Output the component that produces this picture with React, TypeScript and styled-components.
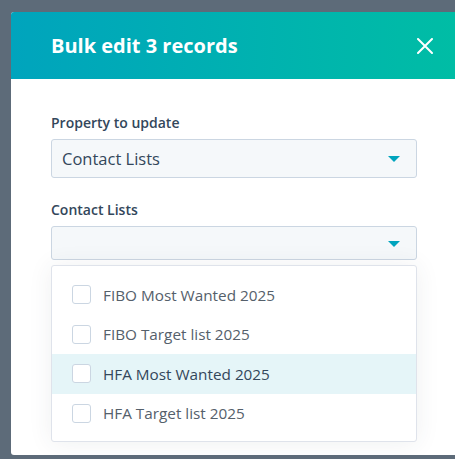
import React from "react";
import styled, { createGlobalStyle } from "styled-components";

const GlobalStyle = createGlobalStyle`
  html, body {
    margin: 0;
    padding: 0;
    background: #5d6b79;
    overflow: hidden;
  }
  body {
    font-family: "Open Sans", "Noto Sans", sans-serif;
    color: #33475b;
  }
`;

const Backdrop = styled.div`
  width: 455px;
  height: 459px;
  padding: 12px 0 0 11px;
  box-sizing: border-box;
`;

const Modal = styled.div`
  width: 444px;
  height: 443px;
  background: #fff;
  border-radius: 3px 0 0 3px;
  overflow: hidden;
  display: flex;
  flex-direction: column;
`;

const Header = styled.div`
  height: 67px;
  flex: none;
  display: flex;
  align-items: center;
  justify-content: space-between;
  padding: 0 22px 0 40px;
  background: linear-gradient(90deg, #00a4bd 0%, #00bda5 100%);
`;

const Title = styled.h1`
  margin: 0;
  font-size: 20px;
  font-weight: 700;
  color: #fff;
`;

const Close = styled.button`
  border: 0;
  background: none;
  padding: 0;
  width: 16px;
  height: 16px;
  display: flex;
  cursor: pointer;
`;

const Body = styled.div`
  padding: 34px 38px 0 40px;
  display: flex;
  flex-direction: column;
`;

const Label = styled.label<{ $top?: number }>`
  display: block;
  font-size: 14px;
  font-weight: 600;
  line-height: 20px;
  margin: ${(p) => p.$top ?? 0}px 0 6px;
  color: #33475b;
`;

const Select = styled.div<{ $h: number }>`
  height: ${(p) => p.$h}px;
  box-sizing: border-box;
  border: 1px solid #cbd6e2;
  border-radius: 3px;
  background: #f5f8fa;
  display: flex;
  align-items: center;
  justify-content: space-between;
  padding: 0 16px 0 10px;
  font-size: 16.5px;
  color: #33475b;
`;

const Caret = styled.span`
  width: 0;
  height: 0;
  border-left: 6px solid transparent;
  border-right: 6px solid transparent;
  border-top: 6px solid #00a4bd;
  margin-top: 1px;
`;

const Menu = styled.ul`
  list-style: none;
  margin: 5px 0 0;
  padding: 9px 0 8px;
  border: 1px solid #dfe3eb;
  border-radius: 3px;
  background: #fff;
  box-shadow: 0 1px 24px rgba(45, 62, 80, 0.08);
`;

const Item = styled.li<{ $active?: boolean }>`
  height: 39.5px;
  display: flex;
  align-items: center;
  padding-left: 20px;
  background: ${(p) => (p.$active ? "#e5f5f8" : "transparent")};
  color: ${(p) => (p.$active ? "#33475b" : "#55606b")};
  font-size: 15.3px;
`;

const Box = styled.span`
  width: 19px;
  height: 19px;
  box-sizing: border-box;
  border: 1px solid #cbd6e2;
  border-radius: 3px;
  background: #fff;
  margin-right: 12px;
  flex: none;
`;

const lists = [
  "FIBO Most Wanted 2025",
  "FIBO Target list 2025",
  "HFA Most Wanted 2025",
  "HFA Target list 2025",
];

export default function App() {
  return (
    <>
      <GlobalStyle />
      <Backdrop>
        <Modal>
          <Header>
            <Title>Bulk edit 3 records</Title>
            <Close aria-label="Close">
              <svg width="16" height="16" viewBox="0 0 16 16">
                <path d="M1 1 L15 15 M15 1 L1 15" stroke="#fff" strokeWidth="2" strokeLinecap="round" />
              </svg>
            </Close>
          </Header>
          <Body>
            <Label>Property to update</Label>
            <Select $h={39}>
              Contact Lists
              <Caret />
            </Select>
            <Label $top={22}>Contact Lists</Label>
            <Select $h={34}>
              <span />
              <Caret />
            </Select>
            <Menu>
              {lists.map((name, i) => (
                <Item key={name} $active={i === 2}>
                  <Box />
                  {name}
                </Item>
              ))}
            </Menu>
          </Body>
        </Modal>
      </Backdrop>
    </>
  );
}
